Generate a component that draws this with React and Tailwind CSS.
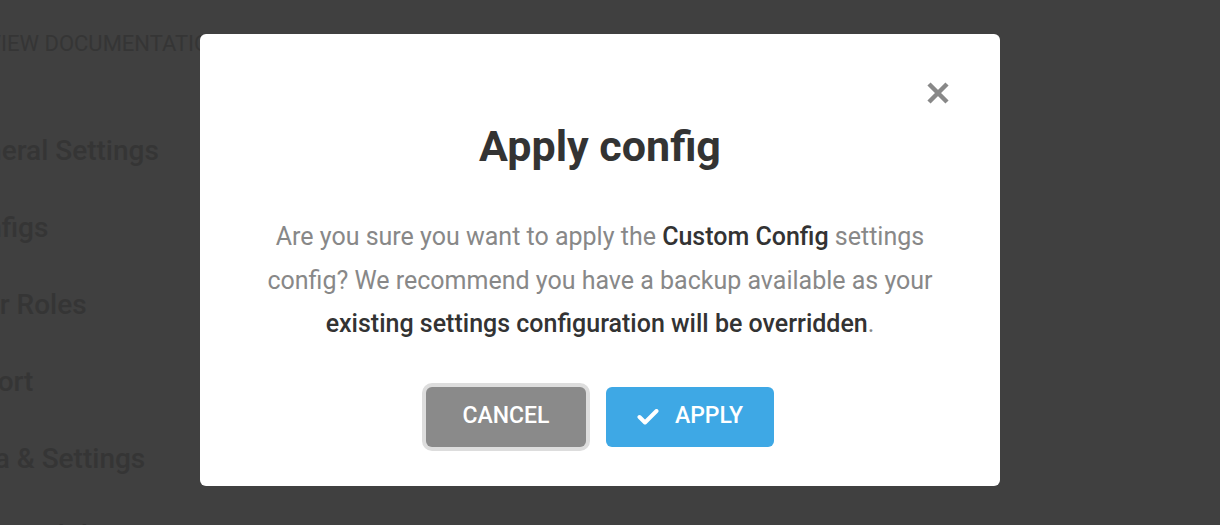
import { useState } from 'react';

const menu = ['General Settings', 'Configs', 'User Roles', 'Export', 'Data & Settings', 'Compatibility'];

const App = () => {
  const [open, setOpen] = useState(true);

  return (
    <div className="relative h-[525px] w-full overflow-hidden bg-[#404040] font-['Roboto',sans-serif]">
      {/* page behind the overlay */}
      <div className="flex flex-col">
        <div className="-ml-[13px] pt-[31px] text-[22px] uppercase leading-[26px] text-[#353535]">
          View Documentation
        </div>
        <ul className="-ml-[48px] mt-[77px] flex flex-col gap-[44px]">
          {menu.map(item => (
            <li key={item} className="text-[28px] font-medium leading-[33px] text-[#353535]">
              {item}
            </li>
          ))}
        </ul>
      </div>

      {open && (
        <div className="absolute inset-0 flex items-start justify-start pl-[200px] pt-[34px]">
          <div className="relative flex h-[452px] w-[800px] flex-col items-center rounded-md bg-white px-[60px] pt-[88px]">
            <button
              type="button"
              onClick={() => setOpen(false)}
              className="absolute right-[51px] top-[48px] text-[#888]"
            >
              <svg width="22" height="22" viewBox="0 0 22 22">
                <path d="M2 2L20 20M20 2L2 20" stroke="currentColor" strokeWidth="4.5" />
              </svg>
            </button>

            <h2 className="text-[43px] font-bold leading-[48px] text-[#333]">Apply config</h2>

            <p className="mt-[45px] text-center text-[25px] leading-[43.5px] text-[#888]">
              Are you sure you want to apply the <span className="font-medium text-[#333]">Custom Config</span>{' '}
              settings config? We recommend you have a backup available as your{' '}
              <span className="font-medium text-[#333]">existing settings configuration will be overridden</span>.
            </p>

            <div className="mt-[41px] flex items-center gap-5">
              <button
                type="button"
                onClick={() => setOpen(false)}
                className="flex h-[60px] w-[160px] items-center justify-center rounded-md bg-[#8a8a8a] text-[23px] font-medium uppercase text-white shadow-[0_0_0_4px_#dddddd]"
              >
                Cancel
              </button>
              <button
                type="button"
                className="flex h-[60px] w-[168px] items-center justify-center gap-4 rounded-md bg-[#3ea8e5] text-[23px] font-medium uppercase text-white"
              >
                <svg width="22" height="16" viewBox="0 0 22 16">
                  <path d="M2.5 8L8 13.5L19.5 2" fill="none" stroke="currentColor" strokeWidth="4" strokeLinecap="round" strokeLinejoin="round" />
                </svg>
                Apply
              </button>
            </div>
          </div>
        </div>
      )}
    </div>
  );
};

export default App;
